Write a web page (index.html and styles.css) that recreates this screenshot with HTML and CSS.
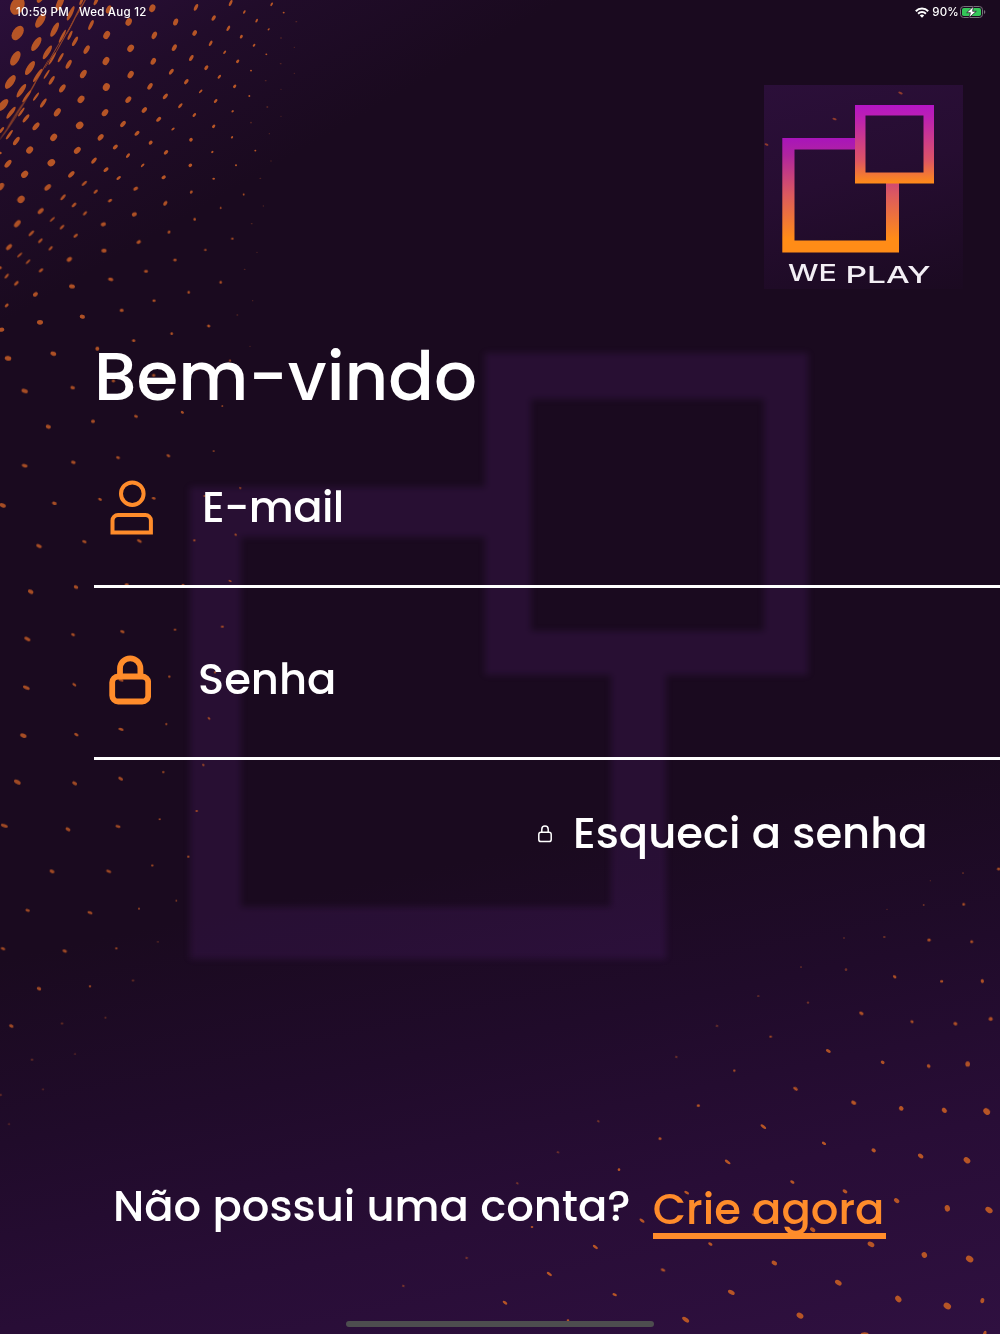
FILE: index.html
```html
<!DOCTYPE html>
<html lang="pt-BR">
<head>
    <meta charset="UTF-8">
    <title>We Play - Login</title>
    <meta name="viewport" content="width=device-width, initial-scale=1">
    <link rel="stylesheet" href="styles.css">
</head>
<body>

    <!-- Background artwork -->
    <svg class="artwork" viewBox="0 0 1000 1334" aria-hidden="true">
        <path class="watermark" fill-rule="evenodd" d="M190 487H485V537H241V907H611V675H666V959H190ZM485 353H808V675H485ZM531 399V631H764V399Z"/>
        <g id="dots" transform="scale(0.33333)"></g>
    </svg>

    <div class="screen">
        <header class="status-bar">
            <div class="status-left">
                <span class="time">10:59 PM</span>
                <span class="date">Wed Aug 12</span>
            </div>
            <div class="status-right">
                <svg class="wifi" width="14" height="11" viewBox="0 0 14 11" fill="none" stroke="#fff" stroke-width="2">
                    <path d="M0.8 4.2a8.7 8.7 0 0 1 12.4 0M3.1 6.7a5.5 5.5 0 0 1 7.8 0"/>
                    <path d="M7 10.8L4.8 8.6a3.1 3.1 0 0 1 4.4 0Z" fill="#fff" stroke="none"/>
                </svg>
                <span>90%</span>
                <svg class="battery" width="26" height="12" viewBox="0 0 26 12">
                    <rect x="0.5" y="0.5" width="22" height="11" rx="3.2" fill="none" stroke="#77707b"/>
                    <rect x="2" y="2" width="19" height="8" rx="1.8" fill="#34c759"/>
                    <path d="M24 4v4q1.300-.6 1.300-2t-1.300-2z" fill="#77707b"/>
                    <path d="M13.500 0.300L6.700 6.700h3.700L9 11.700L16.300 5.300h-3.700z" fill="#fff" stroke="#1b0a20" stroke-width="0.7"/>
                </svg>
            </div>
        </header>

        <div class="brand">
            <svg class="logo" width="199" height="204" viewBox="0 0 199 204">
                <defs>
                    <linearGradient id="bigSquare" x1="0" y1="0" x2="0" y2="1">
                        <stop offset="0" stop-color="#a914bb"/>
                        <stop offset="0.15" stop-color="#b0259f"/>
                        <stop offset="0.5" stop-color="#dc5a5e"/>
                        <stop offset="0.88" stop-color="#ff8c17"/>
                        <stop offset="1" stop-color="#ff8c17"/>
                    </linearGradient>
                    <linearGradient id="smallSquare" x1="0" y1="0" x2="0" y2="1">
                        <stop offset="0" stop-color="#b515c6"/>
                        <stop offset="0.15" stop-color="#bb1fb4"/>
                        <stop offset="0.7" stop-color="#dd5466"/>
                        <stop offset="1" stop-color="#ff8c17"/>
                    </linearGradient>
                </defs>
                <g fill="#8d3a2c">
                    <ellipse cx="136.500" cy="8" rx="2.400" ry="1.100" transform="rotate(25 136.500 8)"/>
                    <ellipse cx="70.500" cy="34" rx="2.200" ry="1.100" transform="rotate(20 70.500 34)"/>
                    <ellipse cx="2.500" cy="59.500" rx="2" ry="1" transform="rotate(20 2.500 59.500)"/>
                </g>
                <path fill="url(#bigSquare)" d="M18.300 53H91V64.500H30.500V155.500H122V98H135V167.500H18.300Z"/>
                <path fill="url(#smallSquare)" fill-rule="evenodd" d="M91 20H170V98.500H91ZM101.500 30.500V87.500H159.500V30.500Z"/>
                <text class="logo-text" x="24" y="196" textLength="49" lengthAdjust="spacingAndGlyphs">WE</text>
                <text class="logo-text" x="81.500" y="197.500" textLength="85" lengthAdjust="spacingAndGlyphs">PLAY</text>
            </svg>
        </div>

        <main>
            <h1>Bem-vindo</h1>

            <form>
                <label class="field email">
                    <svg width="43" height="55" viewBox="0 0 43 55" fill="none" stroke="#ff8c2b" stroke-width="4">
                        <circle cx="22.300" cy="13.700" r="11.300"/>
                        <path d="M2.500 52.500V40.500a5.500 5.500 0 0 1 5.500-5.500H35.400a5.500 5.500 0 0 1 5.500 5.500V52.500Z"/>
                    </svg>
                    <span>E-mail</span>
                </label>
                <label class="field password">
                    <svg width="42" height="50" viewBox="0 0 42 50" fill="none" stroke="#ff8c2b" stroke-width="5.800">
                        <rect x="3.200" y="21.500" width="36" height="25" rx="6"/>
                        <path d="M11 21V13.500a10.200 10.200 0 0 1 20.400 0V21"/>
                    </svg>
                    <span>Senha</span>
                </label>
            </form>

            <a class="forgot">
                <svg width="14" height="18" viewBox="0 0 14 18" fill="none" stroke="#fff" stroke-width="1.500">
                    <rect x="0.800" y="7.200" width="12.400" height="9.400" rx="2.200"/>
                    <path d="M3.800 7V4.200a3.200 3.200 0 0 1 6.400 0V7"/>
                </svg>
                <span>Esqueci a senha</span>
            </a>
        </main>

        <footer class="signup">
            <span class="question">Não possui uma conta?</span>
            <a class="create">Crie agora</a>
        </footer>
        <div class="home-indicator"></div>
    </div>

    <script src="script.js"></script>
</body>
</html>
```

FILE: styles.css
```css
* {
    box-sizing: border-box;
}

body {
    margin: 0;
    font-family: Poppins, Inter, sans-serif;
    font-weight: 500;
    color: #fff;
    background:
        linear-gradient(150deg, #2b0f3a 0%, rgba(43, 15, 58, 0.4) 8%, rgba(43, 15, 58, 0) 17%),
        linear-gradient(168deg, #1a0a1f 0%, #1a0a1f 62%, #200b2a 74%, #280d36 86%, #2f1040 100%);
}

.artwork {
    position: absolute;
    top: 0;
    left: 0;
    width: 1000px;
    height: 1334px;
}

.watermark {
    fill: rgba(120, 50, 170, 0.15);
    filter: blur(3px);
}

#dots {
    fill: #b65526;
}

.screen {
    position: relative;
    display: flex;
    flex-direction: column;
    width: 1000px;
    height: 1334px;
    overflow: hidden;
}

/* Status bar */
.status-bar {
    display: flex;
    justify-content: space-between;
    height: 24px;
    padding: 0 14px 0 16px;
    font-family: Inter, sans-serif;
    font-size: 11.5px;
    line-height: 24px;
    letter-spacing: 0.25px;
}

.status-left,
.status-right {
    display: flex;
    align-items: center;
}

.status-left {
    gap: 10px;
}

.status-right {
    gap: 3px;
}

.battery {
    margin-left: -2px;
}

/* Logo */
.brand {
    display: flex;
    justify-content: flex-end;
    padding: 61px 37px 0 0;
}

.logo {
    background: linear-gradient(165deg, #2b0f39 0%, #260d31 45%, #1b0a21 100%);
}

.logo-text {
    font-family: Inter, sans-serif;
    font-size: 23.5px;
    font-weight: 500;
    fill: #f3eff5;
}

/* Login form */
main {
    padding-left: 94px;
}

h1 {
    margin: 47px 0 0;
    height: 80px;
    font-size: 67.5px;
    font-weight: 500;
    line-height: 81px;
    white-space: nowrap;
}

.field {
    display: flex;
    align-items: flex-start;
    height: 172px;
    padding: 64px 0 0 16px;
    border-bottom: 3px solid #fff;
    font-size: 43.3px;
    line-height: 54px;
}

.email span {
    margin-left: 49px;
    letter-spacing: -0.6px;
}

.password {
    padding: 67px 0 0 15px;
}

.password span {
    margin: -3px 0 0 47px;
}

.forgot {
    display: flex;
    align-items: center;
    margin: 47px 0 0 444px;
    font-size: 43.3px;
    line-height: 54px;
    white-space: nowrap;
}

.forgot span {
    margin: -1px 0 0 21px;
}

/* Sign up */
.signup {
    display: flex;
    align-items: flex-start;
    margin-top: auto;
    padding-left: 113px;
    font-size: 43.3px;
    line-height: 54px;
    white-space: nowrap;
}

.create {
    margin: 3px 0 0 22px;
    padding-right: 2px;
    height: 57px;
    color: #ff8c2b;
    border-bottom: 6px solid #ff8c2b;
}

.home-indicator {
    width: 308px;
    height: 6px;
    margin: 82px auto 7px;
    border-radius: 3px;
    background: #4d4d4f;
}
```

FILE: script.js
```javascript
// Halftone dots, drawn at 3x. Each dot: x, y, rx, ry, angle
const groups = [
    {
        dx: 0, dy: 0, opacity: 1,
        dots: [
            [52,18,28,20,-62],[53,99,24,15,-55],[46,175,24,12,-60],[31,246,24,11,-55],[9,315,22,10,-50],
            [120,-2,12,7,-50],[121,62,24,11,-58],[180,8,26,9,-66],[109,132,24,10,-57],[90,204,24,9,-57],[64,272,24,7,-56],[33,338,22,6,-53],[4,391,12,4,-50],
            [164,89,24,8,-62],[142,157,24,7,-58],[113,226,24,5,-56],[80,289,22,4,-54],[212,40,24,6,-64],[187,109,22,4,-62],[157,176,22,3.5,-60],[245,2,14,4,-65],
            [288,4,13,5,-65],[273,75,16,5,-64],[225,124,16,5,-60],[182,173,16,4,-60],[140,223,16,3,-58],[108,290,15,3.5,-55],[64,336,16,3.5,-55],[28,404,17,4,-54],[210,106,15,4,-64],
            [326,28,13,7,-65],[320,105,13,9,-60],[260,149,14,7,-60],[206,193,15,6,-60],[155,241,15,5,-58],[130,309,16,5,-56],[78,355,15,5,-52],
            [386,66,12,9,-65],[457,25,12,9,-70],[588,22,11,5,-65],[692,9,10,4,-65],[815,13,6,3,-60],[392,145,12,9,-55],[318,183,13,9,-60],[250,222,14,8,-58],[187,265,14,7,-56],[319,261,12,10,-60],
            [243,298,12,9,-50],[172,337,14,8,-55],[108,379,14,7,-50],[49,423,15,6,-55],[463,106,12,7,-65],[527,66,11,7,-70],[460,184,11,7,-60],[392,224,12,8,-58],[385,299,11,7,-50],[315,338,12,8,-50],[239,376,12,10,-40],[161,412,12,9,-50],[89,450,12,9,-50],[24,491,14,7,-50],
            [641,54,9,5,-60],[584,99,9,6,-60],[523,143,11,6,-60],[574,174,10,5,-60],[514,215,10,5,-55],[450,259,11,6,-55],[632,130,9,4,-60],[685,85,9,4,-60],[733,36,6,3,-60],[770,62,6,3,-60],[724,110,6,4,-60],[674,157,6,3,-50],[619,203,8,5,-55],[559,245,9,5,-55],[496,289,10,5,-50],[433,330,10,6,-50],[369,372,11,6,-50],[302,412,11,7,-50],[232,451,12,8,-45],[154,488,12,10,-35],[74,523,12,9,-45],
            [806,88,4,2.5,-50],[762,136,5,3,-50],[713,184,6,4,-50],[658,230,7,3.5,-50],[602,274,7,3,-45],[541,317,9,4,-50],[476,358,9,5,-45],[411,400,9,5,-45],[346,441,9,5,-45],[282,482,11,5,-50],[214,523,12,6,-45],[851,38,3,2.5,0],[799,163,3,2.5,0],[753,212,3,2.5,0],[704,259,6,4,-50],[647,303,7,4,-50],[583,345,7,4,-50],[519,387,6,3,-40],[452,428,7,5,-50],[384,467,8,4,-50],[318,509,9,5,-40],
            [748,288,3,3,0],[698,334,4,3,-40],[641,379,6,4,-50],[573,419,6,5,-50],[498,457,8,5,-45],[428,496,7,3,-45],[356,534,8,4,-40],[696,412,4,3,-50],[637,456,4,3,-40],[571,496,6,5,-40],[491,532,7,5,-30],[766,452,3,2.5,0],[708,496,3,3,0],[641,536,4,3,0],[1,459,4,4,0]
        ]
    },
    {
        // Streaks running along the fold
        dx: 0, dy: 0, opacity: 0.75,
        dots: [[26,381,48,2,-55],[76,300,62,2,-60],[116,230,60,1.8,-60],[162,157,56,1.5,-60],[193,112,60,1.8,-61],[223,57,50,2.2,-64],[248,14,42,2,-61],[44,348,42,1.5,-58]]
    },
    {
        dx: 0, dy: 0, opacity: 0.35,
        dots: [[889,65,3,2,0],[843,114,3,2,0],[883,142,2,2,0],[842,191,3,2,0],[797,242,3,2,0],[883,220,2,2,0],[802,321,3,3,0],[753,368,3,2.5,0],[843,268,2,1.5,0],[843,349,2,1.5,0],[808,401,2,2,0],[813,483,2,2,0],[781,535,3,2,0],[790,618,2,2,0],[755,671,3,2,0],[771,757,2,2,0],[734,808,3,2,0],[758,902,2,2,0],[712,945,3,2.5,0],[750,1039,2,2,0],[690,1080,2,2,0]]
    },
    {
        dx: 0, dy: 480, opacity: 0.95,
        dots: [
            [2,80,13,8,-50],[63,118,12,10,-45],[143,82,12,7,-45],[52,191,13,7,-50],[122,153,11,6,-45],[189,112,11,4,-50],[253,70,10,4,-45],[27,261,11,6,-45],[94,220,11,4,-45],[157,178,10,3,-45],[222,135,9,4,-45],[287,95,8,4,-45],[330,122,7,4,-35],[407,86,8,5,-35],[0,323,5,5,0],[59,285,10,3,-45],[121,242,9,3.5,-45],[186,201,9,3.5,-45],[255,160,8,3.5,-45],
            [20,348,9,3.5,-50],[84,305,9,3,-45],[152,265,8,3.5,-45],[227,227,8,4,-40],[310,193,8,6,-15],[403,163,8,6,-25],[496,130,8,5,-50],[574,96,5,4,-40],[731,103,3,3,0],[662,144,3,3,0],[584,178,4,4,0],[507,216,5,4,-60],[416,246,7,5,-30],[312,272,8,6,0],[208,298,9,6,-35],[123,331,8,4,-40],[49,370,9,4,-45],[20,436,7,4,-40],[106,403,8,6,-30],[216,379,9,6,10],[332,358,8,5,10],[438,334,6,4,0],[525,300,5,4,0],[616,270,4,3,0],[697,236,4,3,0],
            [662,367,4,4,0],[566,397,4,4,0],[462,422,5,4,0],[365,451,6,5,0],[247,470,8,6,10],[120,487,9,7,0],[4,509,9,6,-10],[626,498,5,4,30],[515,521,4,4,0],[401,542,5,4,10],[292,566,6,6,0],[160,581,9,6,20],[24,595,10,7,10]
        ]
    },
    {
        dx: 0, dy: 1020, opacity: 0.9,
        dots: [
            [74,153,10,6,20],[218,143,7,5,10],[340,123,5,4,0],[461,106,5,4,0],[590,90,3,2,0],[690,62,3,3,0],[145,260,8,6,15],[279,244,6,5,0],[408,229,6,4,15],[547,217,5,4,30],[667,198,3,2.5,0],[74,377,9,5,15],[220,367,7,5,15],[354,353,6,4,20],[505,347,6,4,30],[641,333,3,2.5,0],[8,496,10,6,25],[163,490,7,5,15],[300,478,6,4,30],[461,475,6,4,15],[613,468,3,3,0],[721,444,4,2.5,20],[117,618,9,5,25],[253,605,7,4,25],[418,603,8,4,30],[583,601,4,3,0],[707,584,4,3,20],
            [92,755,9,6,30],[228,741,7,5,25],[380,734,6,4,0],[549,734,4,3,0],[690,723,5,3,30],[82,897,10,5,30],[219,884,6,4,25],[367,875,7,4,25],[525,869,4,3,0],[667,860,5,3,0],[79,1043,11,5,25],[223,1034,7,3.5,35],[363,1020,8,4,20],[508,1010,4,3.500,0],[645,997,4,3,0],[70,1187,10,6,25],[229,1184,7,4,35],[363,1168,8,4,20],[499,1152,3.500,3,0],[627,1135,5,3,35]
        ]
    },
    {
        dx: 0, dy: 2280, opacity: 0.85,
        dots: [[52,66,11,6,30],[224,70,8,5,30],[362,56,8,4.500,30],[490,36,4,3,0],[610,15,4,3,20],[13,197,11,5,20],[204,208,8,5,30],[354,199,8,4,15],[479,178,3,3,0],[590,153,4,3,0],[156,334,8,5,30],[326,334,8,4,20],[457,316,4,3,0],[565,290,4,3,0],[83,451,7,4,15],[270,458,8,4,20],[417,446,3,3,0],[529,422,3,2.500,0],[9,566,7,4,20],[194,573,7,4.500,25],[349,565,4,3,0],[117,686,7,5,25],[270,679,4,3,0],[34,798,7,5,30]]
    },
    {
        dx: 0, dy: 2280, opacity: 0.5,
        dots: [[473,545,3,2.500,0],[399,661,4,3,0],[186,790,4,3,0],[316,773,3,3,0],[96,899,4,3,0],[225,882,3,2.500,0],[1,1005,5,3,0],[129,988,3,2.500,0],[27,1092,3,2.500,0]]
    },
    {
        dx: 1920, dy: 2580, opacity: 0.5,
        dots: [[969,39,3,2.500,0],[871,62,2,1.500,0],[851,135,3,3,0],[741,148,2,1.500,0],[733,231,4,3,0],[612,234,3,2,0],[483,321,3,2.500,0],[618,329,4,4,0],[355,408,4,2.500,0],[504,428,4,3.500,0],[231,498,4,3,20],[109,591,4,3,20]]
    },
    {
        dx: 1920, dy: 2580, opacity: 0.95,
        dots: [[1076,27,5,4,0],[971,133,4,4,0],[867,240,5,4.500,0],[995,245,4.500,4.500,0],[764,350,6,4,35],[905,364,5,4,0],[1027,363,5,6,-10],[664,460,7,4.500,30],[816,485,5,4,45],[946,491,6,5,30],[1052,477,6,6,0],[392,530,4,3,0],[565,573,8,4.500,30],[728,607,6,5,30],[866,618,6,5,40],[983,612,7,8,0],[283,632,4,3.500,0],[467,686,8,4.500,35],[641,728,8,5,30],[783,745,6,6,0],[913,751,8,6,40],[1040,754,10,8,40],[175,737,5,3,0],[60,836,4,3,20]]
    },
    {
        dx: 1500, dy: 3300, opacity: 1,
        dots: [
            [790,80,10,4,37],[595,17,4,3,0],[1061,8,7,4,30],[1204,25,7,5.500,45],[1333,31,8,6,45],[1460,35,11,8,45],[480,116,4,3.500,0],[972,130,7,4,30],[1121,151,7,5.500,35],[1262,168,9,6,40],[1401,181,11,8,38],[357,209,4,4,0],[683,186,10,4,37],[877,246,7,4,30],[560,278,8,4,30],[1035,274,8,5,35],[1190,302,9,6,40],[1342,325,8,10,-10],[1467,330,12,8,35],[96,381,4,3,0],[426,362,9,4,37],[762,345,6,4,30],[938,389,9,6,35],[286,441,9,4,37],[631,432,7,4,30],[1113,433,11,7,32],[1273,465,8,9,-25],[1409,477,12,9,35],[148,522,9,4,35],[489,510,7,4,25],[823,489,9,6,30],[1015,548,11,7,35],[15,608,8,4,35],[344,584,7,4,25],[694,577,11,6,30],[1195,597,8,11,-40],[1342,618,12,9,35],[1447,602,6,8,15],[557,659,12,6,35],[900,647,11,8,35],[1094,703,12,6,0],[1454,702,5,10,15],[204,661,4,3,0]
        ]
    },
    {
        dx: 1500, dy: 3300, opacity: 0.6,
        dots: [[295,64,4,3,30],[174,157,4,3,20],[52,250,4,3,30],[-100,474,4,3,20],[-290,558,4,3,20]]
    }
];

const svgNS = 'http://www.w3.org/2000/svg';
const container = document.getElementById('dots');

groups.forEach(group => {
    const g = document.createElementNS(svgNS, 'g');
    g.setAttribute('transform', `translate(${group.dx} ${group.dy})`);
    g.setAttribute('opacity', group.opacity);

    group.dots.forEach(([x, y, rx, ry, angle]) => {
        const dot = document.createElementNS(svgNS, 'ellipse');
        dot.setAttribute('cx', x);
        dot.setAttribute('cy', y);
        dot.setAttribute('rx', rx);
        dot.setAttribute('ry', ry);
        dot.setAttribute('transform', `rotate(${angle} ${x} ${y})`);
        g.appendChild(dot);
    });

    container.appendChild(g);
});
```
